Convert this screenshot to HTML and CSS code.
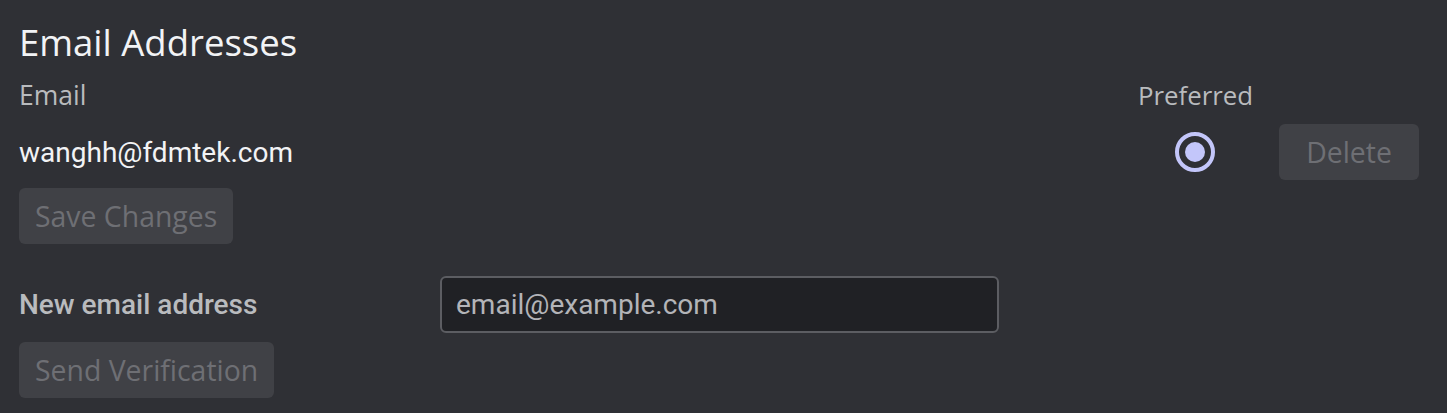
FILE: index.html
```html
<!DOCTYPE html>
<html>
<head>
<meta charset="utf-8">
<link rel="stylesheet" href="styles.css">
</head>
<body>
<div class="page">
  <h2 class="title">Email Addresses</h2>
  <div class="email-grid">
    <div class="col-head">Email</div>
    <div class="col-head pref-head">Preferred</div>
    <div></div>
    <div class="email-value">wanghh@fdmtek.com</div>
    <div class="radio-cell"><span class="radio"><span class="dot"></span></span></div>
    <div><button class="btn delete">Delete</button></div>
  </div>
  <button class="btn save">Save Changes</button>
  <div class="new-row">
    <label class="new-label">New email address</label>
    <input class="new-input" type="text" placeholder="email@example.com">
  </div>
  <button class="btn send">Send Verification</button>
</div>
</body>
</html>
```
FILE: styles.css
```css
html, body {
  margin: 0;
  padding: 0;
  background: #2f3035;
}
.page {
  padding: 18px 28px 0 19px;
  display: flex;
  flex-direction: column;
  align-items: flex-start;
}
.title {
  margin: 0;
  font-family: "Open Sans", sans-serif;
  font-weight: 400;
  font-size: 36.5px;
  line-height: 48px;
  color: #f2f3f5;
}
.email-grid {
  align-self: stretch;
  display: grid;
  grid-template-columns: 1fr 113px 140px;
  column-gap: 28px;
  align-items: center;
}
.col-head {
  font-family: "Open Sans", sans-serif;
  font-size: 26.5px;
  line-height: 40px;
  color: #b9bbbe;
  margin-top: 9px;
  margin-bottom: 9px;
  white-space: nowrap;
}
.pref-head {
  font-size: 25.8px;
}
.email-value {
  font-family: Roboto, sans-serif;
  font-size: 28px;
  color: #f2f3f5;
}
.radio-cell {
  display: flex;
  justify-content: center;
}
.radio {
  width: 40px;
  height: 40px;
  box-sizing: border-box;
  border: 4px solid #c3c6fa;
  border-radius: 50%;
  display: flex;
  align-items: center;
  justify-content: center;
}
.dot {
  width: 20px;
  height: 20px;
  border-radius: 50%;
  background: #c3c6fa;
}
.btn {
  font-family: "Open Sans", sans-serif;
  font-size: 28.4px;
  height: 56px;
  padding: 0 16px;
  border: none;
  border-radius: 6px;
  background: #404146;
  color: #6e6f74;
  cursor: default;
}
.delete {
  width: 140px;
  padding: 0;
}
.save {
  margin-top: 8px;
}
.new-row {
  margin-top: 32px;
  display: flex;
  align-items: center;
}
.new-label {
  width: 421px;
  font-family: Roboto, sans-serif;
  font-weight: 500;
  font-size: 28px;
  color: #b9bbbe;
}
.new-input {
  width: 559px;
  height: 57px;
  box-sizing: border-box;
  background: #202125;
  border: 2px solid #5c5d62;
  border-radius: 6px;
  padding: 0 14px;
  font-family: Roboto, sans-serif;
  font-size: 28px;
  color: #dcddde;
  outline: none;
}
.new-input::placeholder {
  color: #b3b4b8;
}
.send {
  margin-top: 9px;
}
```
